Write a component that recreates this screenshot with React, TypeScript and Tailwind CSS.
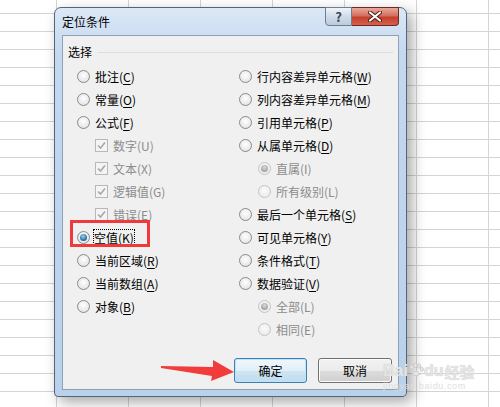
import React from "react";

interface Opt {
  label: string;
  k: string;
  kind: "radio" | "check";
  checked?: boolean;
  disabled?: boolean;
  indent?: boolean;
  focus?: boolean;
}

const leftCol: Opt[] = [
  { label: "批注", k: "C", kind: "radio" },
  { label: "常量", k: "O", kind: "radio" },
  { label: "公式", k: "F", kind: "radio" },
  { label: "数字", k: "U", kind: "check", checked: true, disabled: true, indent: true },
  { label: "文本", k: "X", kind: "check", checked: true, disabled: true, indent: true },
  { label: "逻辑值", k: "G", kind: "check", checked: true, disabled: true, indent: true },
  { label: "错误", k: "E", kind: "check", checked: true, disabled: true, indent: true },
  { label: "空值", k: "K", kind: "radio", checked: true, focus: true },
  { label: "当前区域", k: "R", kind: "radio" },
  { label: "当前数组", k: "A", kind: "radio" },
  { label: "对象", k: "B", kind: "radio" },
];

const rightCol: Opt[] = [
  { label: "行内容差异单元格", k: "W", kind: "radio" },
  { label: "列内容差异单元格", k: "M", kind: "radio" },
  { label: "引用单元格", k: "P", kind: "radio" },
  { label: "从属单元格", k: "D", kind: "radio" },
  { label: "直属", k: "I", kind: "radio", checked: true, disabled: true, indent: true },
  { label: "所有级别", k: "L", kind: "radio", disabled: true, indent: true },
  { label: "最后一个单元格", k: "S", kind: "radio" },
  { label: "可见单元格", k: "Y", kind: "radio" },
  { label: "条件格式", k: "T", kind: "radio" },
  { label: "数据验证", k: "V", kind: "radio" },
  { label: "全部", k: "L", kind: "radio", checked: true, disabled: true, indent: true },
  { label: "相同", k: "E", kind: "radio", disabled: true, indent: true },
];

function Radio({ checked, disabled }: { checked?: boolean; disabled?: boolean }) {
  return (
    <span
      className={`flex h-[13px] w-[13px] shrink-0 items-center justify-center rounded-full border ${
        disabled
          ? "border-[#c4c4c4] bg-[radial-gradient(circle_at_50%_40%,#fbfbfb,#e6e6e6)]"
          : "border-[#8a8a8a] bg-[radial-gradient(circle_at_50%_40%,#ffffff,#dcdcdc)]"
      }`}
    >
      {checked && (
        <span
          className={`h-[7px] w-[7px] rounded-full ${
            disabled
              ? "bg-[radial-gradient(circle_at_50%_35%,#d8d8d8,#8e8e8e)]"
              : "bg-[radial-gradient(circle_at_45%_35%,#8fd3f6,#1d5f93_75%)]"
          }`}
        />
      )}
    </span>
  );
}

function Check() {
  return (
    <span className="flex h-[13px] w-[13px] shrink-0 items-center justify-center border border-[#b8b8b8] bg-[#f4f4f4]">
      <svg width="9" height="9" viewBox="0 0 9 9">
        <path d="M1 4.5 L3.5 7 L8 1.5" fill="none" stroke="#a8a8a8" strokeWidth="1.6" />
      </svg>
    </span>
  );
}

function Row({ o }: { o: Opt }) {
  return (
    <div className={`flex h-[23px] items-center ${o.indent ? (o.kind === "check" ? "pl-[18px]" : "pl-[19px]") : ""}`}>
      {o.kind === "radio" ? <Radio checked={o.checked} disabled={o.disabled} /> : <Check />}
      <span
        className={`whitespace-nowrap leading-[16px] ${o.disabled ? "text-[#8c8c8c]" : "text-black"} ${
          o.focus ? "ml-[3px] border border-dotted border-black" : "ml-[5px]"
        }`}
      >
        {o.label}(
        {o.disabled ? o.k : <span className="underline underline-offset-2">{o.k}</span>})
      </span>
    </div>
  );
}

export default function App() {
  return (
    <div className="relative h-[407px] w-[500px] overflow-hidden bg-white bg-[linear-gradient(#d4d4d4_1px,transparent_1px),linear-gradient(90deg,#d4d4d4_1px,transparent_1px)] bg-[length:72px_18px] bg-[position:56px_13px] font-['Noto_Sans_CJK_SC','Microsoft_YaHei',sans-serif] text-[12px]">
      {/* dialog */}
      <div className="absolute left-[54px] top-[7px] flex h-[390px] w-[353px] flex-col rounded-t-[7px] rounded-b-[4px] border border-[#52657a] bg-[linear-gradient(180deg,#dbe8f6_0%,#c4d8ee_12%,#b9d1ea_100%)] px-[7px] pb-[6px] shadow-[5px_5px_14px_rgba(0,0,0,0.35)]">
        {/* title bar */}
        <div className="flex h-[27px] items-start">
          <span className="mt-[6px] text-[12px] leading-[16px] text-black">定位条件</span>
          <div className="-mt-[1px] ml-auto flex">
            <div className="flex h-[19px] w-[27px] items-center justify-center rounded-bl-[4px] border border-[#6f7f91] bg-[linear-gradient(180deg,#eef3f9,#cfdbe8_50%,#bccbdc)] text-[13px] font-bold leading-none text-[#3b4652]">
              ?
            </div>
            <div className="flex h-[19px] w-[47px] items-center justify-center rounded-br-[4px] border border-l-0 border-[#6b2a22] bg-[linear-gradient(180deg,#e9a99c,#d47060_45%,#c4402b_55%,#d7604b)]">
              <svg width="14" height="11" viewBox="0 0 14 11">
                <path d="M2 1.5 L12 9.5 M12 1.5 L2 9.5" stroke="#4a1a14" strokeWidth="4" strokeLinecap="round" />
                <path d="M2 1.5 L12 9.5 M12 1.5 L2 9.5" stroke="#ffffff" strokeWidth="2.2" strokeLinecap="round" />
              </svg>
            </div>
          </div>
        </div>

        {/* client area */}
        <div className="flex flex-1 flex-col border border-[#8da2b9] bg-[#f0f0f0]">
          <div className="mt-[8px] flex items-center pl-[5px] pr-[5px]">
            <span className="leading-[16px] text-black">选择</span>
            <span className="ml-[6px] h-px flex-1 bg-[#d5dfe5]" />
          </div>

          <div className="mt-[5px] flex pl-[14px]">
            <div className="flex w-[162px] flex-col">
              {leftCol.map((o, i) => (
                <Row key={i} o={o} />
              ))}
            </div>
            <div className="flex flex-col">
              {rightCol.map((o, i) => (
                <Row key={i} o={o} />
              ))}
            </div>
          </div>

          <div className="mt-auto flex justify-end gap-[11px] pb-[6px] pr-[6px]">
            <button className="flex h-[25px] w-[73px] items-center justify-center rounded-[3px] border border-[#3c7fb1] bg-[linear-gradient(180deg,#f0f7fc,#e2eff8_50%,#cfe5f3_51%,#bfdcee)] text-[12px] text-black shadow-[inset_0_0_0_1px_#bfe3fa]">
              确定
            </button>
            <button className="flex h-[25px] w-[74px] items-center justify-center rounded-[3px] border border-[#707070] bg-[linear-gradient(180deg,#f2f2f2,#ebebeb_50%,#dddddd_51%,#cfcfcf)] text-[12px] text-black shadow-[inset_0_0_0_1px_#fcfcfc]">
              取消
            </button>
          </div>
        </div>
      </div>

      {/* annotation: red box */}
      <div className="absolute left-[70px] top-[220px] h-[27px] w-[80px] border-[3px] border-[#f0393a]" />

      {/* annotation: red arrow */}
      <svg className="absolute left-[158px] top-[356px]" width="80" height="30" viewBox="0 0 80 30">
        <polygon points="3,10 55,11 55,4 76,16 53,25 54,20 3,12" fill="#f23b3b" />
      </svg>

      {/* watermark */}
      <div className="absolute left-[383px] top-[362px] flex flex-col items-start leading-none text-[#e4e4e4]">
        <div className="flex items-end font-['Liberation_Sans',sans-serif] text-[16px] font-bold [text-shadow:0_0_1px_#c4c4c4]">
          <span>Bai</span>
          <svg width="16" height="16" viewBox="0 0 22 20" className="mb-[1px]">
            <g fill="#e4e4e4" stroke="#c4c4c4" strokeWidth="1">
              <ellipse cx="5" cy="6" rx="2.4" ry="3" />
              <ellipse cx="10" cy="3.5" rx="2.4" ry="3" />
              <ellipse cx="15" cy="4.5" rx="2.4" ry="3" />
              <ellipse cx="19" cy="9" rx="2.2" ry="2.8" />
              <path d="M5 16 Q11 6 17 16 Q11 20 5 16 Z" />
            </g>
          </svg>
          <span>du</span>
          <span className="ml-[1px] font-['Noto_Sans_CJK_SC',sans-serif] text-[15px] font-bold">经验</span>
        </div>
        <span className="mt-[3px] font-['Liberation_Sans',sans-serif] text-[9px] tracking-[0.6px] text-[#dedede]">
          jingyan.baidu.com
        </span>
      </div>
    </div>
  );
}
